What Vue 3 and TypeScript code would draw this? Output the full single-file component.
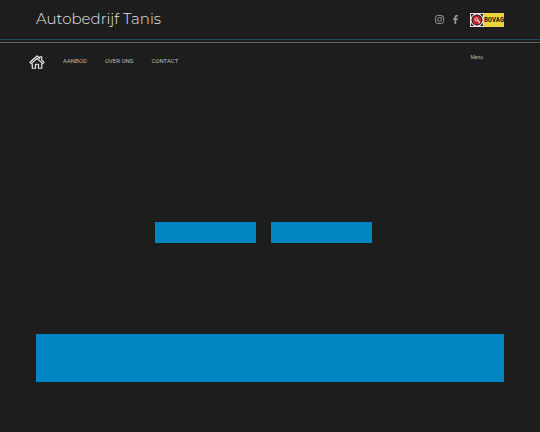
<script setup lang="ts">
interface NavLink {
  label: string
  href: string
}

const links: NavLink[] = [
  { label: 'AANBOD', href: '#aanbod' },
  { label: 'OVER ONS', href: '#over-ons' },
  { label: 'CONTACT', href: '#contact' },
]
</script>

<template>
  <div class="page">
    <header class="top">
      <a class="brand" href="#home">Autobedrijf Tanis</a>
      <div class="social">
        <a href="#instagram" aria-label="Instagram">
          <svg width="9" height="9" viewBox="0 0 18 18" fill="none" stroke="#a4a4a4" stroke-width="1.7">
            <rect x="1" y="1" width="16" height="16" rx="4.5" />
            <circle cx="9" cy="9" r="3.8" />
            <circle cx="13.6" cy="4.4" r="0.6" />
          </svg>
        </a>
        <a class="facebook" href="#facebook" aria-label="Facebook">
          <svg width="5" height="9" viewBox="0 0 10 18" fill="#9c9c9c">
            <path d="M3 18V10H0V7h3V4.6C3 1.6 4.7 0 7.4 0H10v3H8.2C6.8 3 6.4 3.6 6.4 4.8V7h3.4l-.5 3H6.4v8z" />
          </svg>
        </a>
        <a class="bovag" href="#bovag">
          <svg width="14" height="14" viewBox="0 0 28 28" aria-hidden="true">
            <rect width="28" height="28" fill="#e4e0df" />
            <path d="M2 2h6L2 8zM26 2h-6l6 6zM2 26h6l-6-6zM26 26h-6l6-6z" fill="#242020" />
            <circle cx="14" cy="14" r="11" fill="#241b1c" />
            <circle cx="14" cy="14" r="9" fill="#c4202c" />
            <circle cx="13" cy="13" r="4" fill="#ecd0d0" />
            <path d="M14 15l2-2 5 6-2 2z" fill="#f0dddd" />
            <circle cx="13" cy="13" r="2" fill="#b3232d" />
          </svg>
          <span>BOVAG</span>
        </a>
      </div>
    </header>
    <div class="rules"></div>
    <nav class="nav">
      <a class="home" href="#home" aria-label="Home">
        <svg width="16" height="14" viewBox="0 0 32 28" fill="none" stroke="#e8e8e8" stroke-width="2.4" stroke-linejoin="round">
          <path d="M16 2L2 14.5l2.5 2.8L16 7l11.5 10.3L30 14.5l-4.5-4V3.5h-4v3.4z" />
          <path d="M6.5 17v9.5H13v-8h6v8h6.5V17" />
        </svg>
      </a>
      <a v-for="link in links" :key="link.label" class="link" :href="link.href">{{ link.label }}</a>
      <button class="menu" type="button">Menu</button>
    </nav>
    <main>
      <div class="actions">
        <button type="button" aria-label="Aanbod"></button>
        <button type="button" aria-label="Contact"></button>
      </div>
      <section class="banner"></section>
    </main>
  </div>
</template>

<style>
body {
  background: #1d1d1d;
}
</style>

<style scoped>
.page {
  font-family: Roboto, "Liberation Sans", sans-serif;
  color: #b8b8b8;
  padding-bottom: 48px;
}
a {
  color: inherit;
  text-decoration: none;
}
svg {
  display: block;
}
.top {
  display: flex;
  align-items: center;
  justify-content: space-between;
  height: 39px;
  padding: 0 36px;
}
.brand {
  padding-bottom: 2px;
  font-family: Montserrat, Inter, sans-serif;
  font-size: 15px;
  font-weight: 300;
  line-height: 22px;
  color: #e4e4e4;
}
.social {
  display: flex;
  align-items: center;
}
.facebook {
  margin: 0 12px 0 9px;
}
.bovag {
  display: flex;
  align-items: center;
  width: 34px;
  height: 14px;
  background: #ead33b;
}
.bovag span {
  flex: 1;
  text-align: center;
  font-family: "Liberation Sans Narrow", "Roboto Condensed", "Liberation Sans", sans-serif;
  font-size: 7px;
  font-weight: 700;
  line-height: 14px;
  color: #29240d;
}
.rules {
  height: 2px;
  border-top: 1px solid #1a4a64;
  border-bottom: 1px solid #62625f;
}
.nav {
  display: flex;
  align-items: center;
  gap: 18px;
  height: 38px;
  padding: 0 57px 0 29px;
  font-size: 6px;
  line-height: 8px;
}
.link {
  padding-bottom: 2px;
}
.menu {
  margin: 0 0 10px auto;
  padding: 0;
  border: 0;
  background: none;
  color: #b8b8b8;
  font-family: inherit;
  font-size: 5px;
  line-height: 8px;
}
.actions {
  display: grid;
  grid-template-columns: 101px 101px;
  justify-content: center;
  gap: 15px;
  padding: 141px 13px 91px 0;
}
.actions button {
  height: 21px;
  padding: 0;
  border: 0;
  background: #0086c3;
}
.banner {
  height: 48px;
  margin: 0 36px;
  background: #0086c3;
}
</style>
